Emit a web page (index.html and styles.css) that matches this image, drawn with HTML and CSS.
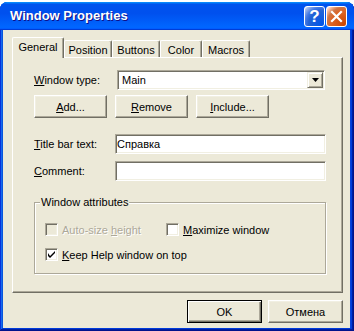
FILE: index.html
```html
<!DOCTYPE html>
<html lang="en">
<head>
    <meta charset="UTF-8">
    <title>Window Properties</title>
    <link rel="stylesheet" href="styles.css">
</head>
<body>
    <div class="window">
        <div class="titlebar">
            <span class="title">Window Properties</span>
            <div class="title-buttons">
                <div class="tbtn help">?</div>
                <div class="tbtn close">
                    <svg width="19" height="19" viewBox="0 0 19 19"><path d="M5 5 L14 14 M14 5 L5 14" stroke="#fff" stroke-width="2.2" stroke-linecap="square"/></svg>
                </div>
            </div>
        </div>

        <div class="client">
            <div class="tabs">
                <div class="tab active">General</div>
                <div class="tab t-position">Position</div>
                <div class="tab t-buttons">Buttons</div>
                <div class="tab t-color">Color</div>
                <div class="tab t-macros">Macros</div>
            </div>

            <div class="panel">
                <div class="row">
                    <span class="lbl lbl-type"><u>W</u>indow type:</span>
                    <div class="combo">
                        <span class="combo-text">Main</span>
                        <div class="combo-btn">
                            <svg width="7" height="4" viewBox="0 0 7 4"><path d="M0 0 H7 L3.5 4 Z" fill="#000"/></svg>
                        </div>
                    </div>
                </div>

                <div class="row row-btns">
                    <div class="btn"><u>A</u>dd...</div>
                    <div class="btn"><u>R</u>emove</div>
                    <div class="btn"><u>I</u>nclude...</div>
                </div>

                <div class="row row-title">
                    <span class="lbl lbl-field"><u>T</u>itle bar text:</span>
                    <div class="field">Справка</div>
                </div>

                <div class="row row-comment">
                    <span class="lbl lbl-field"><u>C</u>omment:</span>
                    <div class="field"></div>
                </div>

                <div class="group">
                    <span class="legend">Window attributes</span>
                    <div class="check-row">
                        <div class="check-item first disabled">
                            <span class="box"></span>
                            <span class="check-lbl">Auto-size <u>h</u>eight</span>
                        </div>
                        <div class="check-item">
                            <span class="box"></span>
                            <span class="check-lbl"><u>M</u>aximize window</span>
                        </div>
                    </div>
                    <div class="check-row second">
                        <div class="check-item">
                            <span class="box">
                                <svg width="7" height="7" viewBox="0 0 7 7"><path d="M0 2 L0 5 L2 7 L7 2 L7 0 L2 5 Z" fill="#000"/></svg>
                            </span>
                            <span class="check-lbl"><u>K</u>eep Help window on top</span>
                        </div>
                    </div>
                </div>
            </div>

            <div class="dialog-btns">
                <div class="btn dbtn default">OK</div>
                <div class="btn dbtn">Отмена</div>
            </div>
        </div>
    </div>
</body>
</html>
```

FILE: styles.css
```css
html, body {
    margin: 0;
    background: #fff;
}

body {
    font-family: "Liberation Sans", Arial, sans-serif;
    font-size: 11px;
    color: #000;
}

.window {
    width: 354px;
    height: 329px;
    margin-top: 2px;
    box-sizing: border-box;
    display: flex;
    flex-direction: column;
    background: #0842da;
    border-radius: 8px 8px 0 0;
    box-shadow: inset -1px -1px #00138c, inset 1px 1px #0831d9,
                inset -2px -2px #001ea0, inset 2px 2px #166aee,
                inset -3px -3px #003bda, inset 3px 3px #0855dd;
}

/* title bar */
.titlebar {
    height: 28px;
    display: flex;
    align-items: center;
    justify-content: space-between;
    padding: 0 7px 0 10px;
    border-radius: 7px 7px 0 0;
    background: linear-gradient(180deg, #0997ff, #0053ee 8%, #0050ee 40%, #06f 88%, #06f 93%, #005bff 95%, #003dd7 96%, #003dd7);
}

.title {
    color: #fff;
    font-weight: bold;
    font-size: 13px;
    text-shadow: 1px 1px #0f1089;
    margin-top: -1px;
}

.title-buttons {
    display: flex;
    gap: 1px;
    margin-top: 1px;
}

.tbtn {
    width: 21px;
    height: 21px;
    box-sizing: border-box;
    border: 1px solid #fff;
    border-radius: 3px;
    display: flex;
    align-items: center;
    justify-content: center;
}

.help {
    background: radial-gradient(circle at 90% 90%, #0054e9 0%, #2263d5 55%, #4479e4 70%, #a3bbec 90%, #fff 100%);
    color: #fff;
    font-weight: bold;
    font-size: 17px;
    line-height: 19px;
}

.close {
    background: radial-gradient(circle at 90% 90%, #cc4600 0%, #dc6527 55%, #cd7546 70%, #ffccb2 90%, #fff 100%);
}

/* client area */
.client {
    height: 298px;
    margin: 0 4px 0 3px;
    box-sizing: border-box;
    padding-top: 7px;
    background: #ece9d8;
}

.tabs {
    display: flex;
    align-items: flex-end;
    height: 20px;
    margin-left: 9px;
}

.tab {
    height: 17px;
    box-sizing: border-box;
    border-top: 1px solid #fff;
    border-left: 1px solid #fff;
    border-right: 1px solid #716f64;
    border-radius: 2px 2px 0 0;
    box-shadow: inset -1px 0 #aca899;
    background: #ece9d8;
    display: flex;
    align-items: center;
    justify-content: center;
    padding-top: 1px;
}

.tab.active {
    position: relative;
    z-index: 2;
    width: 52px;
    height: 21px;
    margin-bottom: -1px;
    padding-top: 0;
    padding-bottom: 3px;
}

.t-position { width: 48px; }
.t-buttons { width: 48px; }
.t-color { width: 42px; }
.t-macros { width: 48px; }

.panel {
    width: 331px;
    height: 236px;
    margin-left: 9px;
    box-sizing: border-box;
    border-top: 1px solid #fff;
    border-left: 1px solid #fff;
    border-right: 1px solid #716f64;
    border-bottom: 1px solid #716f64;
    box-shadow: inset -1px -1px #aca899;
    padding: 12px 0 0 21px;
}

.row {
    display: flex;
    align-items: center;
    height: 20px;
}

.lbl-type { width: 83px; }
.lbl-field { width: 81px; }

.combo {
    width: 208px;
    height: 20px;
    box-sizing: border-box;
    display: flex;
    align-items: center;
    justify-content: space-between;
    background: #fff;
    border: 1px solid;
    border-color: #aca899 #fff #fff #aca899;
    box-shadow: inset 1px 1px #716f64, inset -1px -1px #f1efe2;
    padding: 1px 1px 1px 4px;
}

.combo-btn {
    width: 16px;
    height: 16px;
    box-sizing: border-box;
    display: flex;
    align-items: center;
    justify-content: center;
    background: #ece9d8;
    border: 1px solid;
    border-color: #f1efe2 #716f64 #716f64 #f1efe2;
    box-shadow: inset 1px 1px #fff, inset -1px -1px #aca899;
}

.row-btns {
    height: 23px;
    margin-top: 5px;
    gap: 8px;
}

.btn {
    width: 73px;
    height: 23px;
    box-sizing: border-box;
    display: flex;
    align-items: center;
    justify-content: center;
    background: #ece9d8;
    border: 1px solid;
    border-color: #fff #716f64 #716f64 #fff;
    box-shadow: inset -1px -1px #aca899, inset 1px 1px #f1efe2;
}

.row-title { margin-top: 16px; }
.row-comment { margin-top: 7px; }

.field {
    width: 211px;
    height: 20px;
    box-sizing: border-box;
    background: #fff;
    border: 1px solid;
    border-color: #aca899 #fff #fff #aca899;
    box-shadow: inset 1px 1px #716f64, inset -1px -1px #f1efe2;
    padding-left: 1px;
    line-height: 18px;
}

/* group box */
.group {
    position: relative;
    width: 292px;
    height: 72px;
    margin-top: 21px;
    box-sizing: border-box;
    border: 1px solid #aca899;
    box-shadow: inset 1px 1px #fff, 1px 1px #fff;
    padding: 20px 0 0 10px;
}

.legend {
    position: absolute;
    top: -7px;
    left: 5px;
    padding: 0 1px;
    line-height: 13px;
    background: #ece9d8;
}

.check-row {
    display: flex;
    height: 13px;
    align-items: center;
}

.check-row.second { margin-top: 12px; }

.check-item {
    display: flex;
    align-items: center;
}

.check-item.first { width: 121px; }

.box {
    width: 13px;
    height: 13px;
    box-sizing: border-box;
    display: flex;
    align-items: center;
    justify-content: center;
    background: #fff;
    border: 1px solid;
    border-color: #aca899 #fff #fff #aca899;
    box-shadow: inset 1px 1px #716f64, inset -1px -1px #f1efe2;
}

.check-lbl { margin-left: 4px; }

.disabled .box { background: #ece9d8; }

.disabled .check-lbl {
    color: #aca899;
    text-shadow: 1px 1px #fff;
}

/* OK / Cancel */
.dialog-btns {
    display: flex;
    justify-content: flex-end;
    gap: 6px;
    margin-top: 7px;
    padding-right: 7px;
}

.dbtn { width: 75px; }

.btn.default {
    border: 1px solid #000;
    box-shadow: inset 1px 1px #fff, inset -1px -1px #716f64, inset -2px -2px #aca899;
}
```
